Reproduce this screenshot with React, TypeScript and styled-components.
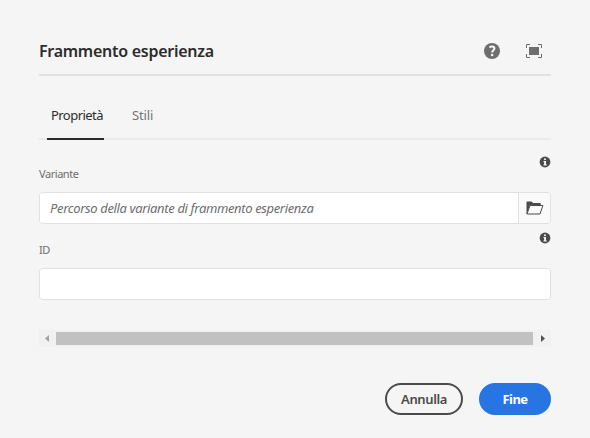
import React from 'react';
import styled, { createGlobalStyle, css } from 'styled-components';

const GlobalStyle = createGlobalStyle`
  *, *::before, *::after { box-sizing: border-box; }
  body {
    margin: 0;
    background: #f5f5f5;
    font-family: "Noto Sans", "Open Sans", sans-serif;
    color: #2c2c2c;
  }
`;

const Dialog = styled.main`
  display: flex;
  flex-direction: column;
  width: 590px;
  height: 438px;
  padding: 28px 39px 23px;
  overflow: hidden;
  background: #f5f5f5;
`;

const Header = styled.header`
  display: flex;
  align-items: center;
  height: 48px;
  flex: none;
  border-bottom: 2px solid #e1e1e1;
`;

const Title = styled.h1`
  flex: 1;
  margin: 0;
  font-size: 16px;
  font-weight: 600;
  line-height: 24px;
  letter-spacing: -0.27px;
  white-space: nowrap;
`;

const IconButton = styled.button`
  display: flex;
  align-items: center;
  justify-content: center;
  width: 32px;
  height: 32px;
  padding: 0;
  margin-left: 10px;
  border: 0;
  background: transparent;
  color: #6e6e6e;
`;

const HeaderActions = styled.div`
  display: flex;
  margin-right: 1px;
`;

const TabList = styled.div`
  display: flex;
  gap: 17px;
  flex: none;
  height: 48px;
  margin-top: 16px;
  padding-left: 8px;
  box-shadow: inset 0 -2px #eaeaea;
`;

const Tab = styled.button<{ $active?: boolean }>`
  height: 48px;
  padding: 0 0 0 4px;
  width: 57px;
  border: 0;
  border-bottom: 2px solid ${({ $active }) => ($active ? '#2c2c2c' : 'transparent')};
  background: transparent;
  color: ${({ $active }) => ($active ? '#2c2c2c' : '#747474')};
  font: 400 13px/20px "Noto Sans", sans-serif;
  letter-spacing: -0.55px;
  text-align: left;
  white-space: nowrap;
  ${({ $active }) => !$active && css`padding-left: 11px; letter-spacing: -0.15px;`}
`;

const Field = styled.section`
  display: flex;
  flex-direction: column;
  flex: none;
  height: 76px;
`;

const InfoRow = styled.div`
  display: flex;
  justify-content: flex-end;
  height: 11px;
  color: #4b4b4b;
`;

const Label = styled.label`
  height: 25px;
  font-size: 11px;
  line-height: 14px;
  letter-spacing: -0.45px;
  color: #6e6e6e;
`;

const InputGroup = styled.div`
  display: flex;
  flex: none;
  height: 32px;
  border: 1px solid #e1e1e1;
  border-radius: 4px;
  background: #fff;
  overflow: hidden;
`;

const Input = styled.input`
  flex: 1;
  min-width: 0;
  padding: 0 10px;
  border: 0;
  outline: 0;
  background: #fff;
  font: 400 13px/20px "Noto Sans", sans-serif;
  letter-spacing: -0.36px;
  &::placeholder {
    color: #6e6e6e;
    font-style: italic;
    opacity: 1;
  }
`;

const BrowseButton = styled.button`
  display: flex;
  align-items: center;
  justify-content: center;
  width: 32px;
  padding: 0;
  border: 0;
  border-left: 1px solid #e1e1e1;
  background: #fafafa;
  color: #4b4b4b;
`;

const Fields = styled.div`
  display: flex;
  flex-direction: column;
  flex: none;
  height: 174px;
  padding-top: 16px;
`;

const ScrollBar = styled.div`
  display: grid;
  grid-template-columns: 17px 1fr 18px;
  align-items: center;
  flex: none;
  height: 17px;
  margin-top: 16px;
  background: #f1f1f1;
`;

const ScrollThumb = styled.div`
  height: 13px;
  background: #c1c1c1;
`;

const ScrollArrow = styled.svg`
  display: block;
  width: 17px;
  height: 17px;
`;

const Footer = styled.footer`
  display: flex;
  justify-content: flex-end;
  gap: 16px;
  margin-top: auto;
`;

const ActionButton = styled.button<{ $primary?: boolean }>`
  width: ${({ $primary }) => ($primary ? 72 : 78)}px;
  height: 32px;
  padding: 0;
  border: 2px solid ${({ $primary }) => ($primary ? '#2675e2' : '#4b4b4b')};
  border-radius: 16px;
  background: ${({ $primary }) => ($primary ? '#2675e2' : 'transparent')};
  color: ${({ $primary }) => ($primary ? '#fff' : '#4b4b4b')};
  font: ${({ $primary }) => ($primary ? 700 : 600)} 13px/20px "Noto Sans", sans-serif;
  letter-spacing: ${({ $primary }) => ($primary ? -0.6 : -0.4)}px;
`;

const HelpIcon = () => (
  <svg width="16" height="16" viewBox="0 0 16 16">
    <circle cx="8" cy="8" r="8" fill="currentColor" />
    <path d="M5.5 4.5C6.2 3.8 7 3.5 8 3.5c1.5 0 2.4.8 2.4 1.9 0 1.8-2.2 1.9-2.2 4" fill="none" stroke="#f5f5f5" strokeWidth="2.1" />
    <circle cx="8.1" cy="12" r="1.3" fill="#f5f5f5" />
  </svg>
);

const FullScreenIcon = () => (
  <svg width="16" height="14" viewBox="0 0 16 14">
    <path d="M.5 4V.5H4M12 .5h3.5V4M15.5 10v3.5H12M4 13.5H.5V10" fill="none" stroke="currentColor" />
    <path d="M3 3h10v8H3z" fill="currentColor" />
  </svg>
);

const InfoIcon = () => (
  <svg width="12" height="12" viewBox="0 0 12 12">
    <circle cx="6" cy="6" r="5.4" fill="currentColor" />
    <circle cx="6" cy="3.2" r="1" fill="#f5f5f5" />
    <path d="M4.5 5H7v3.5h.8v1H4.4v-1h.7V6h-.6z" fill="#f5f5f5" />
  </svg>
);

const FolderIcon = () => (
  <svg width="18" height="14" viewBox="0 0 18 14">
    <path d="M.5 13V1.2Q.5.5 1.2.5h4.3L7.2 2H14q.8 0 .8.8V4H4L.8 13z" fill="currentColor" />
    <path d="M4.1 4.5h12.8L14 13H1z" fill="#fafafa" stroke="currentColor" />
  </svg>
);

export default function App() {
  return (
    <>
      <GlobalStyle />
      <Dialog>
        <Header>
          <Title>Frammento esperienza</Title>
          <HeaderActions>
            <IconButton aria-label="Aiuto"><HelpIcon /></IconButton>
            <IconButton aria-label="Schermo intero"><FullScreenIcon /></IconButton>
          </HeaderActions>
        </Header>
        <TabList role="tablist">
          <Tab role="tab" aria-selected $active>Proprietà</Tab>
          <Tab role="tab">Stili</Tab>
        </TabList>
        <Fields>
          <Field>
            <InfoRow><InfoIcon /></InfoRow>
            <Label htmlFor="variant">Variante</Label>
            <InputGroup>
              <Input id="variant" placeholder="Percorso della variante di frammento esperienza" />
              <BrowseButton aria-label="Sfoglia"><FolderIcon /></BrowseButton>
            </InputGroup>
          </Field>
          <Field>
            <InfoRow><InfoIcon /></InfoRow>
            <Label htmlFor="fragment-id">ID</Label>
            <InputGroup><Input id="fragment-id" /></InputGroup>
          </Field>
        </Fields>
        <ScrollBar>
          <ScrollArrow viewBox="0 0 17 17"><path d="M10 5v7L6 8.5z" fill="#a3a3a3" /></ScrollArrow>
          <ScrollThumb />
          <ScrollArrow viewBox="0 0 17 17"><path d="M8 5v7l4-3.5z" fill="#505050" /></ScrollArrow>
        </ScrollBar>
        <Footer>
          <ActionButton>Annulla</ActionButton>
          <ActionButton $primary>Fine</ActionButton>
        </Footer>
      </Dialog>
    </>
  );
}
